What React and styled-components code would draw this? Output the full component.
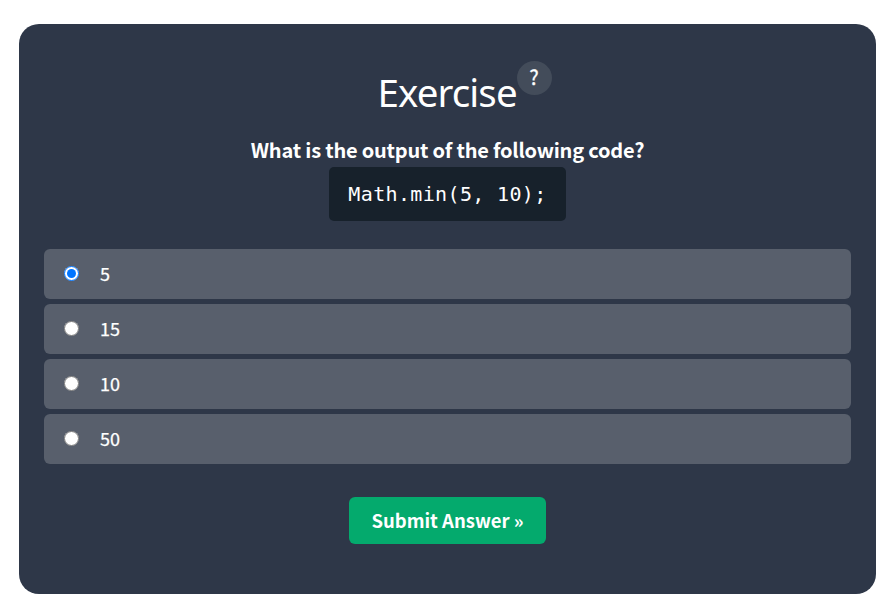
import React, { useState } from "react";
import styled, { createGlobalStyle } from "styled-components";

const GlobalStyle = createGlobalStyle`
  *, *::before, *::after { box-sizing: border-box; }
  body {
    margin: 0;
    background: #fff;
    font-family: "Noto Sans CJK SC", "Noto Sans", sans-serif;
  }
`;

const Page = styled.main`
  height: 610px;
  padding: 24px 4px 16px 19px;
  overflow: hidden;
`;

const Card = styled.form`
  display: flex;
  flex-direction: column;
  align-items: center;
  height: 570px;
  padding: 37px 25px 0;
  border-radius: 20px;
  background: #2e3748;
  color: #fff;
`;

const Header = styled.header`
  display: flex;
  align-items: flex-start;
  height: 64px;
  margin-left: 34px;
`;

const Title = styled.h2`
  margin: 4px 0 0;
  width: 139px;
  font: 400 38.5px/54px "Noto Sans", sans-serif;
  letter-spacing: -0.9px;
  white-space: nowrap;
`;

const Help = styled.span`
  width: 35px;
  height: 34px;
  border-radius: 50%;
  background: #434c5a;
  font-size: 20px;
  line-height: 32px;
  text-align: center;
  -webkit-text-stroke: 0.3px #fff;
`;

const Question = styled.p`
  margin: 9px 0 2px;
  font-size: 20px;
  font-weight: 700;
  line-height: 31px;
  letter-spacing: -0.2px;
  white-space: nowrap;
`;

const Code = styled.code`
  width: 237px;
  height: 54px;
  border-radius: 5px;
  background: #17212b;
  font: 400 20px/54px "DejaVu Sans Mono", monospace;
  letter-spacing: 0.35px;
  text-align: center;
  white-space: pre;
`;

const Options = styled.div`
  display: grid;
  gap: 5px;
  align-self: stretch;
  margin-top: 28px;
`;

const Option = styled.label`
  display: flex;
  align-items: center;
  height: 50px;
  padding-left: 20px;
  border-radius: 6px;
  background: #585f6c;
  font-size: 18px;
  line-height: 48px;
`;

const Radio = styled.input`
  width: 15px;
  height: 15px;
  margin: 0 21px 1px 0;
`;

const AnswerText = styled.span`
  height: 50px;
  -webkit-text-stroke: 0.25px #fff;
`;

const Submit = styled.button`
  width: 197px;
  height: 47px;
  margin-top: 33px;
  padding: 0;
  border: 0;
  border-radius: 6px;
  background: #04aa6d;
  color: #fff;
  font: 700 18.5px/47px "Noto Sans CJK SC", sans-serif;
  white-space: nowrap;
`;

const answers = ["5", "15", "10", "50"];

export default function App() {
  const [selected, setSelected] = useState("5");
  return (
    <>
      <GlobalStyle />
      <Page>
        <Card onSubmit={(e) => e.preventDefault()}>
          <Header>
            <Title>Exercise</Title>
            <Help>?</Help>
          </Header>
          <Question>What is the output of the following code?</Question>
          <Code>Math.min(5, 10);</Code>
          <Options>
            {answers.map((answer) => (
              <Option key={answer}>
                <Radio
                  type="radio"
                  name="answer"
                  checked={selected === answer}
                  onChange={() => setSelected(answer)}
                />
                <AnswerText>{answer}</AnswerText>
              </Option>
            ))}
          </Options>
          <Submit type="submit">Submit Answer »</Submit>
        </Card>
      </Page>
    </>
  );
}
